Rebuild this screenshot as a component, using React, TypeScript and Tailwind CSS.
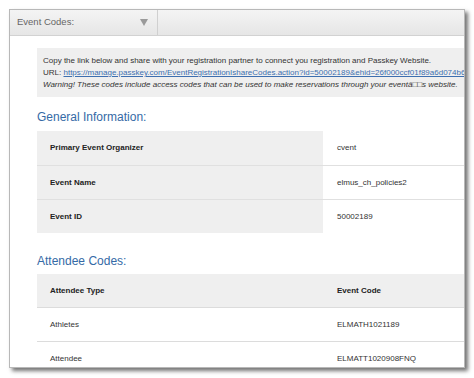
import React from "react";

const font = { fontFamily: '"Liberation Sans", Arial, sans-serif' };

export default function App() {
  return (
    <div className="w-[474px] h-[378px] bg-white relative overflow-hidden" style={font}>
      <div className="absolute left-[9px] top-[9px] w-[456px] h-[359px] bg-white border border-[#b8b8b8] overflow-hidden shadow-[3px_3px_4px_rgba(0,0,0,0.55)]">
        {/* header */}
        <div className="flex h-[26px] bg-gradient-to-b from-[#f4f4f4] to-[#e6e6e6] border-b border-[#d2d2d2]">
          <div className="w-[148px] flex items-center justify-between pl-[7px] pr-[9px] border-r border-[#d0d0d0]">
            <span className="text-[9.5px] text-[#666]">Event Codes:</span>
            <svg width="8" height="7" viewBox="0 0 8 7">
              <path d="M0 0 L8 0 L4 7 Z" fill="#9a9a9a" />
            </svg>
          </div>
          <div className="flex-1" />
        </div>
        {/* body */}
        <div className="pl-[27px] pt-[12px] w-[560px]">
          <div className="bg-[#efefef] h-[49px] pl-[6px] pt-[7px] text-[8px] leading-[12px] text-[#333] whitespace-nowrap">
            <div>Copy the link below and share with your registration partner to connect you registration and Passkey Website.</div>
            <div>
              URL:{" "}
              <span className="text-[#3d6fb0] underline">
                https://manage.passkey.com/EventRegistrationIshareCodes.action?id=50002189&amp;ehid=26f000ccf01f89a6d074b6e1
              </span>
            </div>
            <div className="italic">
              Warning! These codes include access codes that can be used to make reservations through your eventâ□□s website.
            </div>
          </div>
          <div className="mt-[11px] h-[23px] text-[12px] text-[#356aa6] leading-[18px]">General Information:</div>
          <div className="flex flex-col">
            {[
              ["Primary Event Organizer", "cvent"],
              ["Event Name", "elmus_ch_policies2"],
              ["Event ID", "50002189"],
            ].map(([k, v], i) => (
              <div key={k} className={`flex h-[34px] ${i > 0 ? "border-t border-[#e0e0e0]" : ""}`}>
                <div className="w-[286px] bg-[#efefef] flex items-center pl-[13px] text-[8px] font-bold text-[#222]">{k}</div>
                <div className="flex-1 flex items-center pl-[14px] text-[8px] text-[#333]">{v}</div>
              </div>
            ))}
          </div>
          <div className="mt-[19px] h-[22px] text-[12px] text-[#356aa6] leading-[18px]">Attendee Codes:</div>
          <div className="flex flex-col">
            <div className="flex h-[34px] bg-[#efefef] border-b border-[#dcdcdc]">
              <div className="w-[286px] flex items-center pl-[13px] text-[8px] font-bold text-[#222]">Attendee Type</div>
              <div className="flex-1 flex items-center pl-[14px] text-[8px] font-bold text-[#222]">Event Code</div>
            </div>
            {[
              ["Athletes", "ELMATH1021189"],
              ["Attendee", "ELMATT1020908FNQ"],
            ].map(([k, v]) => (
              <div key={k} className="flex h-[34px] border-b border-[#dcdcdc]">
                <div className="w-[286px] flex items-center pl-[13px] text-[8px] text-[#333]">{k}</div>
                <div className="flex-1 flex items-center pl-[14px] text-[8px] text-[#333]">{v}</div>
              </div>
            ))}
          </div>
        </div>
      </div>
    </div>
  );
}
